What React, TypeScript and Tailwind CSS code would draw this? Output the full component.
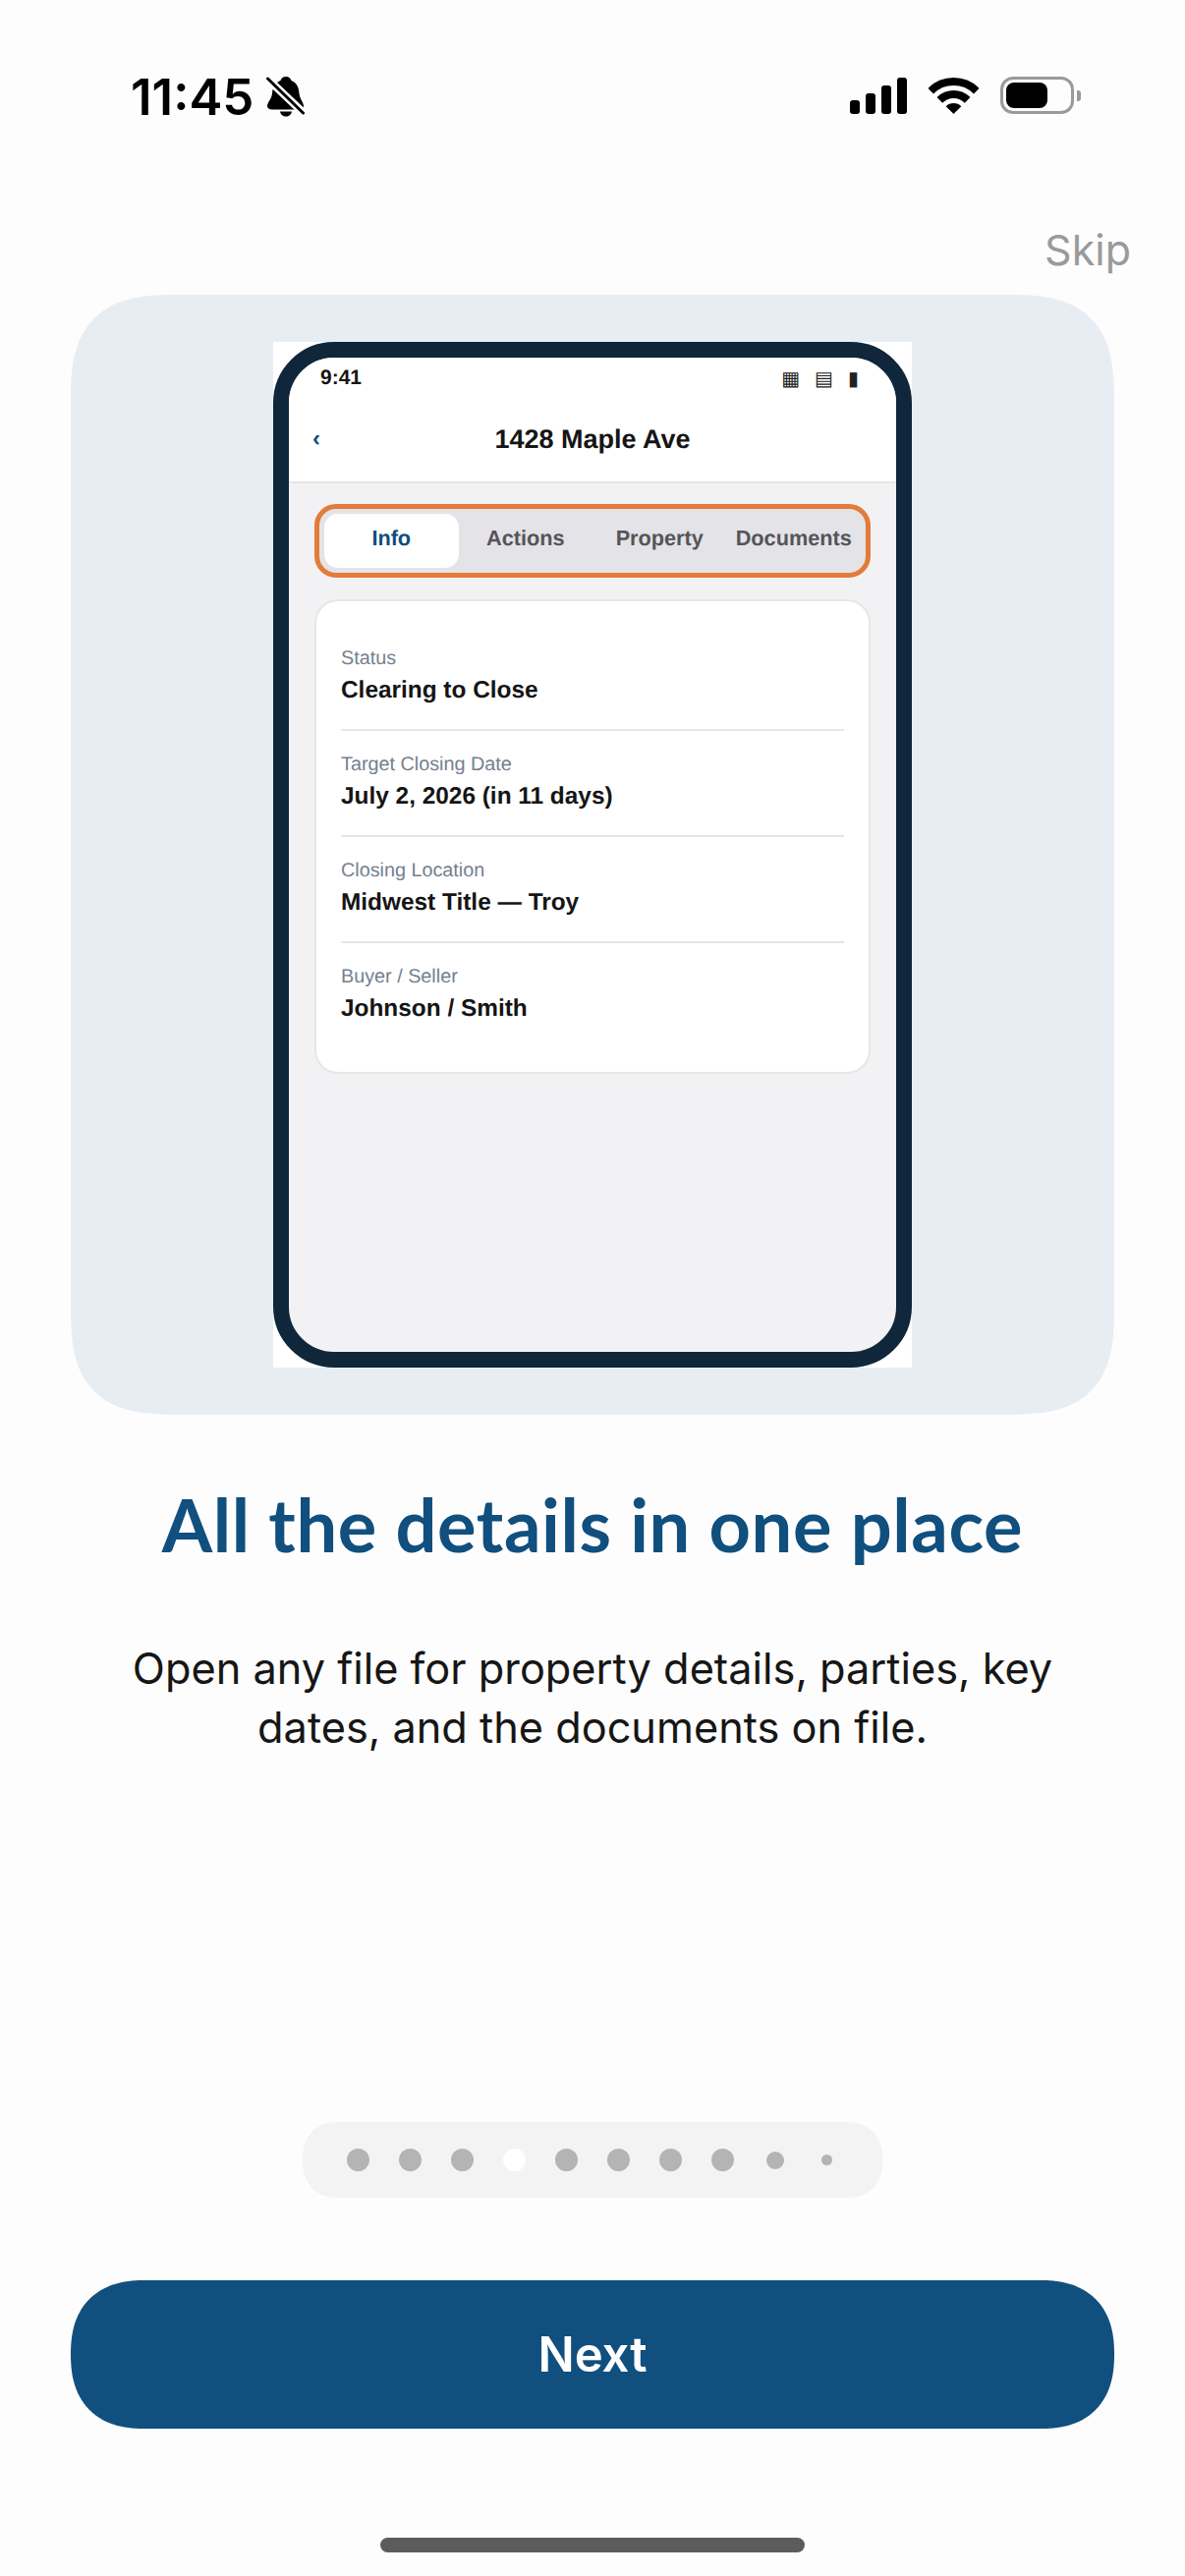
import React from 'react'

const fields = [
  { label: 'Status', value: 'Clearing to Close' },
  { label: 'Target Closing Date', value: 'July 2, 2026 (in 11 days)' },
  { label: 'Closing Location', value: 'Midwest Title — Troy' },
  { label: 'Buyer / Seller', value: 'Johnson / Smith' },
]

const dots = [
  { size: 'size-[23px]', color: 'bg-[#b4b4b4]' },
  { size: 'size-[23px]', color: 'bg-[#b4b4b4]' },
  { size: 'size-[23px]', color: 'bg-[#b4b4b4]' },
  { size: 'size-[23px]', color: 'bg-white' },
  { size: 'size-[23px]', color: 'bg-[#b4b4b4]' },
  { size: 'size-[23px]', color: 'bg-[#b4b4b4]' },
  { size: 'size-[23px]', color: 'bg-[#b4b4b4]' },
  { size: 'size-[23px]', color: 'bg-[#b4b4b4]' },
  { size: 'size-[18px]', color: 'bg-[#b4b4b4]' },
  { size: 'size-[11px]', color: 'bg-[#b4b4b4]' },
]

function BellOff() {
  return (
    <svg width="39" height="42" viewBox="0 0 39 42" className="shrink-0">
      <path d="M20 1C23 1 25 3 25.5 5C31 7 33 12 33.5 18C34 24 38 27 38 31C38 33 36 34.5 34 34.5L6 34.5C3 34.5 1 33 1 31C1 27 5.5 24 6 18C6.5 12 9 7 14.5 5C15 3 17 1 20 1Z" fill="#000" />
      <path d="M14 36.5H26C25.5 39.5 23 41.5 20 41.5C17 41.5 14.5 39.5 14 36.5Z" fill="#000" />
      <path d="M1 3L38 38" stroke="#fdfdfd" strokeWidth="8" />
      <path d="M1.5 3L37.5 38" stroke="#000" strokeWidth="3" strokeLinecap="round" />
    </svg>
  )
}

function Signal() {
  return (
    <div className="flex items-end gap-[6px]">
      <div className="w-[10px] h-[14px] rounded-[3px] bg-black" />
      <div className="w-[10px] h-[21px] rounded-[3px] bg-black" />
      <div className="w-[10px] h-[29px] rounded-[3px] bg-black" />
      <div className="w-[10px] h-[37px] rounded-[3px] bg-black" />
    </div>
  )
}

function Wifi() {
  return (
    <svg width="51" height="37" viewBox="0 0 51 37">
      <path d="M2.2 13.7A33 33 0 0 1 48.8 13.7" fill="none" stroke="#000" strokeWidth="8" />
      <path d="M11.36 22.86A20 20 0 0 1 39.64 22.86" fill="none" stroke="#000" strokeWidth="8" />
      <path d="M25.5 37L17.7 29.2A11 11 0 0 1 33.3 29.2Z" fill="#000" />
    </svg>
  )
}

function Battery() {
  return (
    <div className="flex items-center gap-[3px]">
      <div className="w-[75px] h-[38px] rounded-[13px] border-[3px] border-[#9a9a9a] p-[3px]">
        <div className="w-[42px] h-full rounded-[8px] bg-black" />
      </div>
      <div className="w-[4px] h-[11px] rounded-r-[3px] bg-[#9a9a9a]" />
    </div>
  )
}

function PhoneMock() {
  return (
    <div className="w-[650px] h-[1044px] bg-white">
      <div className="h-full rounded-[62px] border-[16px] border-[#0f263b] bg-[#f2f2f4] overflow-hidden flex flex-col font-['Liberation_Sans',sans-serif] [text-rendering:geometricPrecision]">
        <div className="h-[42px] shrink-0 bg-white flex items-center justify-between pl-[32px] pr-[38px]">
          <span className="text-[21px] font-bold text-[#151515]">9:41</span>
          <div className="flex items-center gap-[15px] text-[20px] leading-none text-[#222] font-['DejaVu_Sans',sans-serif]">
            <span>▦</span>
            <span>▤</span>
            <span>▮</span>
          </div>
        </div>
        <div className="h-[86px] shrink-0 bg-white border-b-2 border-[#e8e6e2] relative flex items-center justify-center pb-[2px]">
          <span className="absolute left-[24px] top-[29px] text-[24px] leading-none font-bold text-[#0f4c7c]">‹</span>
          <span className="text-[27px] font-bold text-[#151515]">1428 Maple Ave</span>
        </div>
        <div className="px-[26px] pt-[21px] flex flex-col gap-[22px]">
          <div className="h-[75px] rounded-[22px] border-[5px] border-[#e37b39] bg-[#e3e3e8] p-[5px] grid grid-cols-4">
            <div className="rounded-[14px] bg-white flex items-center justify-center pb-[5px] text-[21.7px] font-bold text-[#0f4c7c]">Info</div>
            <div className="flex items-center justify-center pb-[5px] text-[21.7px] font-bold text-[#555558]">Actions</div>
            <div className="flex items-center justify-center pb-[5px] text-[21.7px] font-bold text-[#555558]">Property</div>
            <div className="flex items-center justify-center pb-[5px] text-[21.7px] font-bold text-[#555558]">Documents</div>
          </div>
          <div className="h-[483px] rounded-[24px] border-2 border-[#e8e6e2] bg-white px-[25px] pt-[24px]">
            {fields.map((f, i) => (
              <div key={f.label} className={i < 3 ? 'h-[108px] pt-[21px] border-b-2 border-[#e8e6e2]' : 'h-[108px] pt-[21px]'}>
                <div className="h-[26px] leading-[26px] text-[19.8px] text-[#74808f]">{f.label}</div>
                <div className="mt-[4px] h-[32px] leading-[32px] text-[24.4px] font-bold text-[#151515]">{f.value}</div>
              </div>
            ))}
          </div>
        </div>
      </div>
    </div>
  )
}

export default function App() {
  return (
    <div className="w-[1206px] h-[2622px] bg-[#fdfdfd] flex flex-col font-['Inter',sans-serif]">
      <div className="h-[206px] shrink-0 pt-[77px] pl-[133px] pr-[106px] flex items-start justify-between">
        <div className="flex items-center gap-[13px] h-[42px]">
          <span className="text-[51px] leading-none font-semibold text-black">11:45</span>
          <BellOff />
        </div>
        <div className="flex items-center gap-[22px] h-[40px]">
          <Signal />
          <Wifi />
          <Battery />
        </div>
      </div>

      <div className="h-[96px] shrink-0 flex items-center justify-end pr-[55px]">
        <span className="text-[43px] text-[#9a9a9a]">Skip</span>
      </div>

      <div className="mt-[-2px] mx-[72px] h-[1140px] shrink-0 rounded-[110px] [corner-shape:superellipse(1.5)] bg-[#e8edf4] pt-[48px] flex justify-center">
        <PhoneMock />
      </div>

      <h1 className="mt-[72px] h-[80px] leading-[80px] text-center text-[74px] tracking-[0.6px] font-bold text-[#104f7e] font-['Lato',sans-serif]">
        All the details in one place
      </h1>
      <p className="mt-[76px] text-center text-[43.3px] leading-[60px] text-[#161616]">
        Open any file for property details, parties, key
        <br />
        dates, and the documents on file.
      </p>

      <div className="flex-1" />

      <div className="mx-auto w-[590px] h-[77px] rounded-[38.5px] [corner-shape:superellipse(1.25)] bg-[#f3f3f3] pl-[30px] flex items-center">
        {dots.map((d, i) => (
          <div key={i} className="w-[53px] flex justify-center">
            <div className={`rounded-full ${d.size} ${d.color}`} />
          </div>
        ))}
      </div>

      <button className="mt-[84px] mx-[72px] h-[151px] shrink-0 rounded-[75.5px] [corner-shape:superellipse(1.25)] bg-[#114f7e] text-white text-[49px] font-semibold">
        Next
      </button>

      <div className="mt-[111px] mb-[24px] mx-auto w-[432px] h-[15px] shrink-0 rounded-full bg-[#5c5c5c]" />
    </div>
  )
}
